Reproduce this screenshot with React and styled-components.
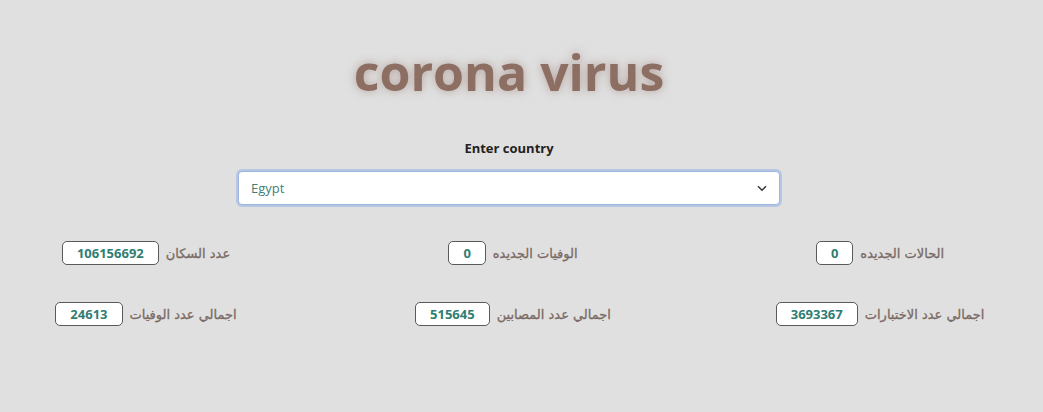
import React, { useState } from 'react';
import styled, { createGlobalStyle } from 'styled-components';

const Global = createGlobalStyle`
    html, body {
        margin: 0;
        padding: 0;
        background: #e0e0e0;
    }
    body {
        font-family: "Open Sans", "DejaVu Sans", sans-serif;
    }
`;

const Page = styled.div`
    width: 1026px;
    padding-top: 39px;
`;

const Header = styled.div`
    display: flex;
    flex-direction: column;
    align-items: center;
    padding-right: 8px;
`;

const Title = styled.h1`
    margin: 0;
    font-family: "Open Sans", sans-serif;
    font-weight: 700;
    font-size: 50px;
    line-height: 66px;
    color: #8d6e63;
    text-shadow: 0 0 10px rgba(141, 110, 99, 0.55);
`;

const Label = styled.label`
    margin-top: 34px;
    font-size: 13px;
    font-weight: 700;
    color: #222;
`;

const SelectWrap = styled.div`
    position: relative;
    margin-top: 14px;
    width: 542px;
`;

const Select = styled.select`
    appearance: none;
    width: 100%;
    height: 34px;
    box-sizing: border-box;
    padding: 0 12px;
    font-family: "Open Sans", sans-serif;
    font-size: 13px;
    color: #3f7f76;
    background: #fff;
    border: 1px solid #9fb6dc;
    border-radius: 4px;
    box-shadow: 0 0 0 2px #b5c7e4;
    outline: none;
`;

const Chevron = styled.svg`
    position: absolute;
    right: 13px;
    top: 14px;
    pointer-events: none;
`;

const Grid = styled.div`
    direction: rtl;
    display: grid;
    grid-template-columns: repeat(3, 290px);
    column-gap: 77px;
    row-gap: 37px;
    justify-content: center;
    margin-top: 36px;
`;

const Stat = styled.div`
    display: flex;
    align-items: center;
    justify-content: center;
    gap: 7px;
`;

const StatName = styled.span`
    font-family: "DejaVu Sans", sans-serif;
    font-size: 13px;
    font-weight: 400;
    color: #7a6a64;
    -webkit-text-stroke: 0.3px #7a6a64;
`;

const Value = styled.span`
    direction: ltr;
    height: 24px;
    box-sizing: border-box;
    display: flex;
    align-items: center;
    padding: 0 14px;
    background: #fff;
    border: 1px solid #5a5a5a;
    border-radius: 5px;
    font-size: 13px;
    font-weight: 700;
    color: #2f7d73;
`;

const stats = [
    { name: 'الحالات الجديده', value: 0 },
    { name: 'الوفيات الجديده', value: 0 },
    { name: 'عدد السكان', value: 106156692 },
    { name: 'اجمالي عدد الاختبارات', value: 3693367 },
    { name: 'اجمالي عدد المصابين', value: 515645 },
    { name: 'اجمالي عدد الوفيات', value: 24613 },
];

function App() {
    const [country, setCountry] = useState('Egypt');
    return (
        <>
            <Global />
            <Page>
                <Header>
                    <Title>corona virus</Title>
                    <Label>Enter country</Label>
                    <SelectWrap>
                        <Select value={country} onChange={e => setCountry(e.target.value)}>
                            <option>Egypt</option>
                            <option>Italy</option>
                            <option>Spain</option>
                        </Select>
                        <Chevron width="10" height="7" viewBox="0 0 10 7">
                            <path d="M1 1.2l4 4 4-4" fill="none" stroke="#333" strokeWidth="1.4" />
                        </Chevron>
                    </SelectWrap>
                </Header>
                <Grid>
                    {stats.map(s => (
                        <Stat key={s.name}>
                            <StatName>{s.name}</StatName>
                            <Value>{s.value}</Value>
                        </Stat>
                    ))}
                </Grid>
            </Page>
        </>
    );
}

export default App;
